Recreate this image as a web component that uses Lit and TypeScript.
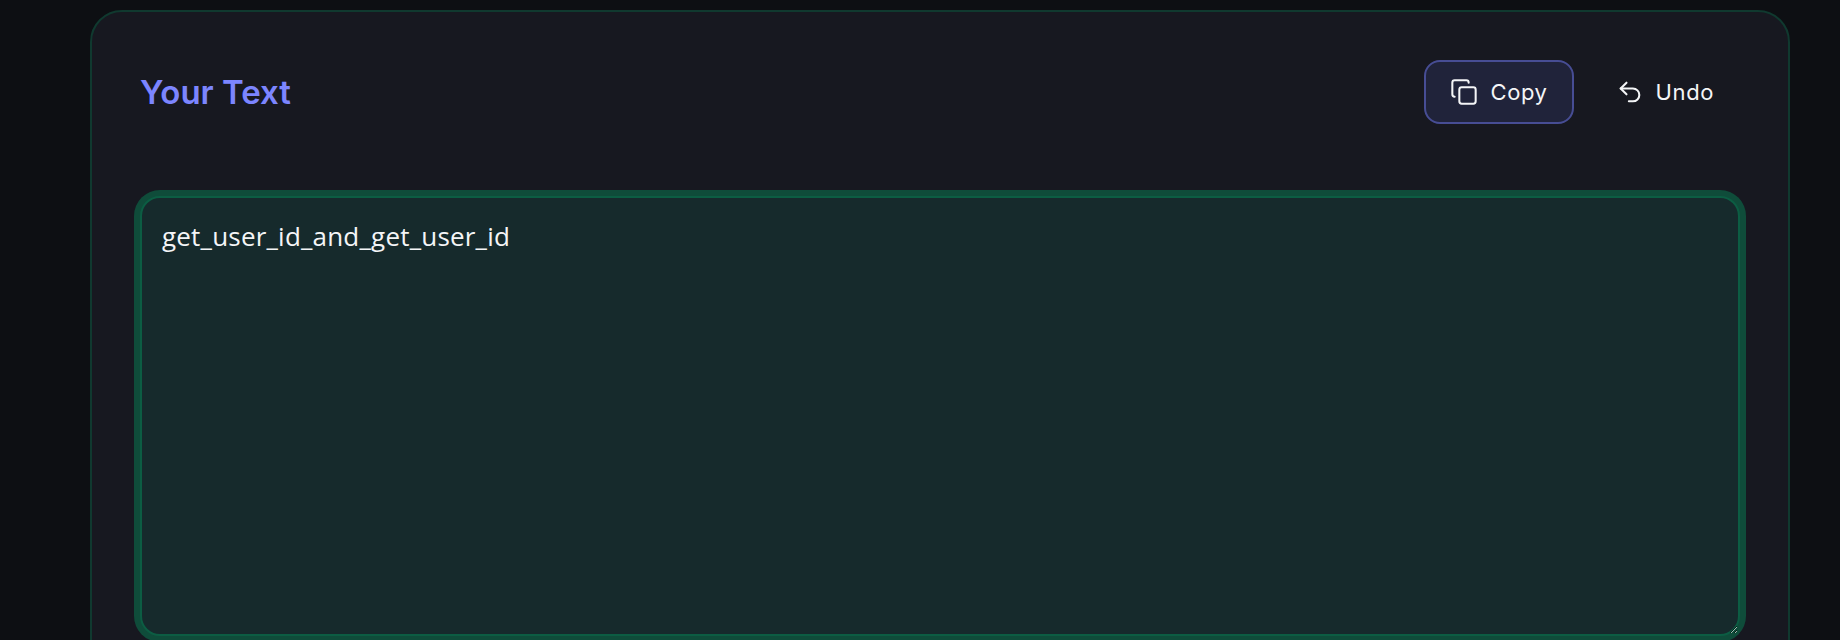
import { LitElement, html, css } from "lit";
import { customElement } from "lit/decorators.js";

@customElement("app-root")
export class AppRoot extends LitElement {
  static styles = css`
    :host {
      display: block;
      box-sizing: border-box;
      width: 1840px;
      height: 640px;
      overflow: hidden;
      padding: 10px 50px 0 90px;
      background: #0d0f13;
      font-family: "Inter", "Liberation Sans", sans-serif;
      color: #f4f5f7;
    }
    .card {
      box-sizing: border-box;
      height: 700px;
      padding: 48px;
      background: #171820;
      border: 2px solid #10392f;
      border-radius: 32px;
    }
    .head {
      display: flex;
      align-items: center;
      justify-content: space-between;
      height: 64px;
      margin-bottom: 72px;
    }
    h2 {
      margin: 0;
      font-size: 33px;
      font-weight: 600;
      letter-spacing: 0;
      color: #7c85ff;
    }
    .actions {
      display: flex;
      gap: 16px;
    }
    button {
      display: flex;
      align-items: center;
      gap: 12px;
      box-sizing: border-box;
      height: 64px;
      padding: 0 24px;
      background: transparent;
      border: 2px solid transparent;
      border-radius: 16px;
      color: inherit;
      font: inherit;
      font-size: 22px;
      letter-spacing: 0.6px;
    }
    button.active {
      background: #20233a;
      border-color: #474d94;
    }
    svg {
      width: 28px;
      height: 28px;
      fill: none;
      stroke: currentColor;
      stroke-width: 1.75;
      stroke-linecap: round;
      stroke-linejoin: round;
    }
    textarea {
      display: block;
      box-sizing: border-box;
      width: 100%;
      height: 440px;
      padding: 20px;
      background: #162a2c;
      border: 2px solid #0c5d43;
      border-radius: 20px;
      box-shadow: 0 0 0 6px #0f4c3a;
      outline: none;
      color: #f4f5f7;
      color-scheme: dark;
      font-family: "Open Sans", sans-serif;
      font-size: 26px;
      letter-spacing: 0.2px;
      line-height: 36px;
      resize: vertical;
    }
  `;

  render() {
    return html`
      <section class="card">
        <div class="head">
          <h2>Your Text</h2>
          <div class="actions">
            <button class="active">
              <svg viewBox="0 0 24 24">
                <rect x="8" y="8" width="14" height="14" rx="2"></rect>
                <path d="M4 16c-1.1 0-2-.9-2-2V4c0-1.1.9-2 2-2h10c1.1 0 2 .9 2 2"></path>
              </svg>
              Copy
            </button>
            <button>
              <svg viewBox="0 0 24 24">
                <path d="M9 14 4 9l5-5"></path>
                <path d="M4 9h10.5a5.5 5.5 0 0 1 0 11H11"></path>
              </svg>
              Undo
            </button>
          </div>
        </div>
        <textarea .value=${"get_user_id_and_get_user_id"}></textarea>
      </section>
    `;
  }
}
